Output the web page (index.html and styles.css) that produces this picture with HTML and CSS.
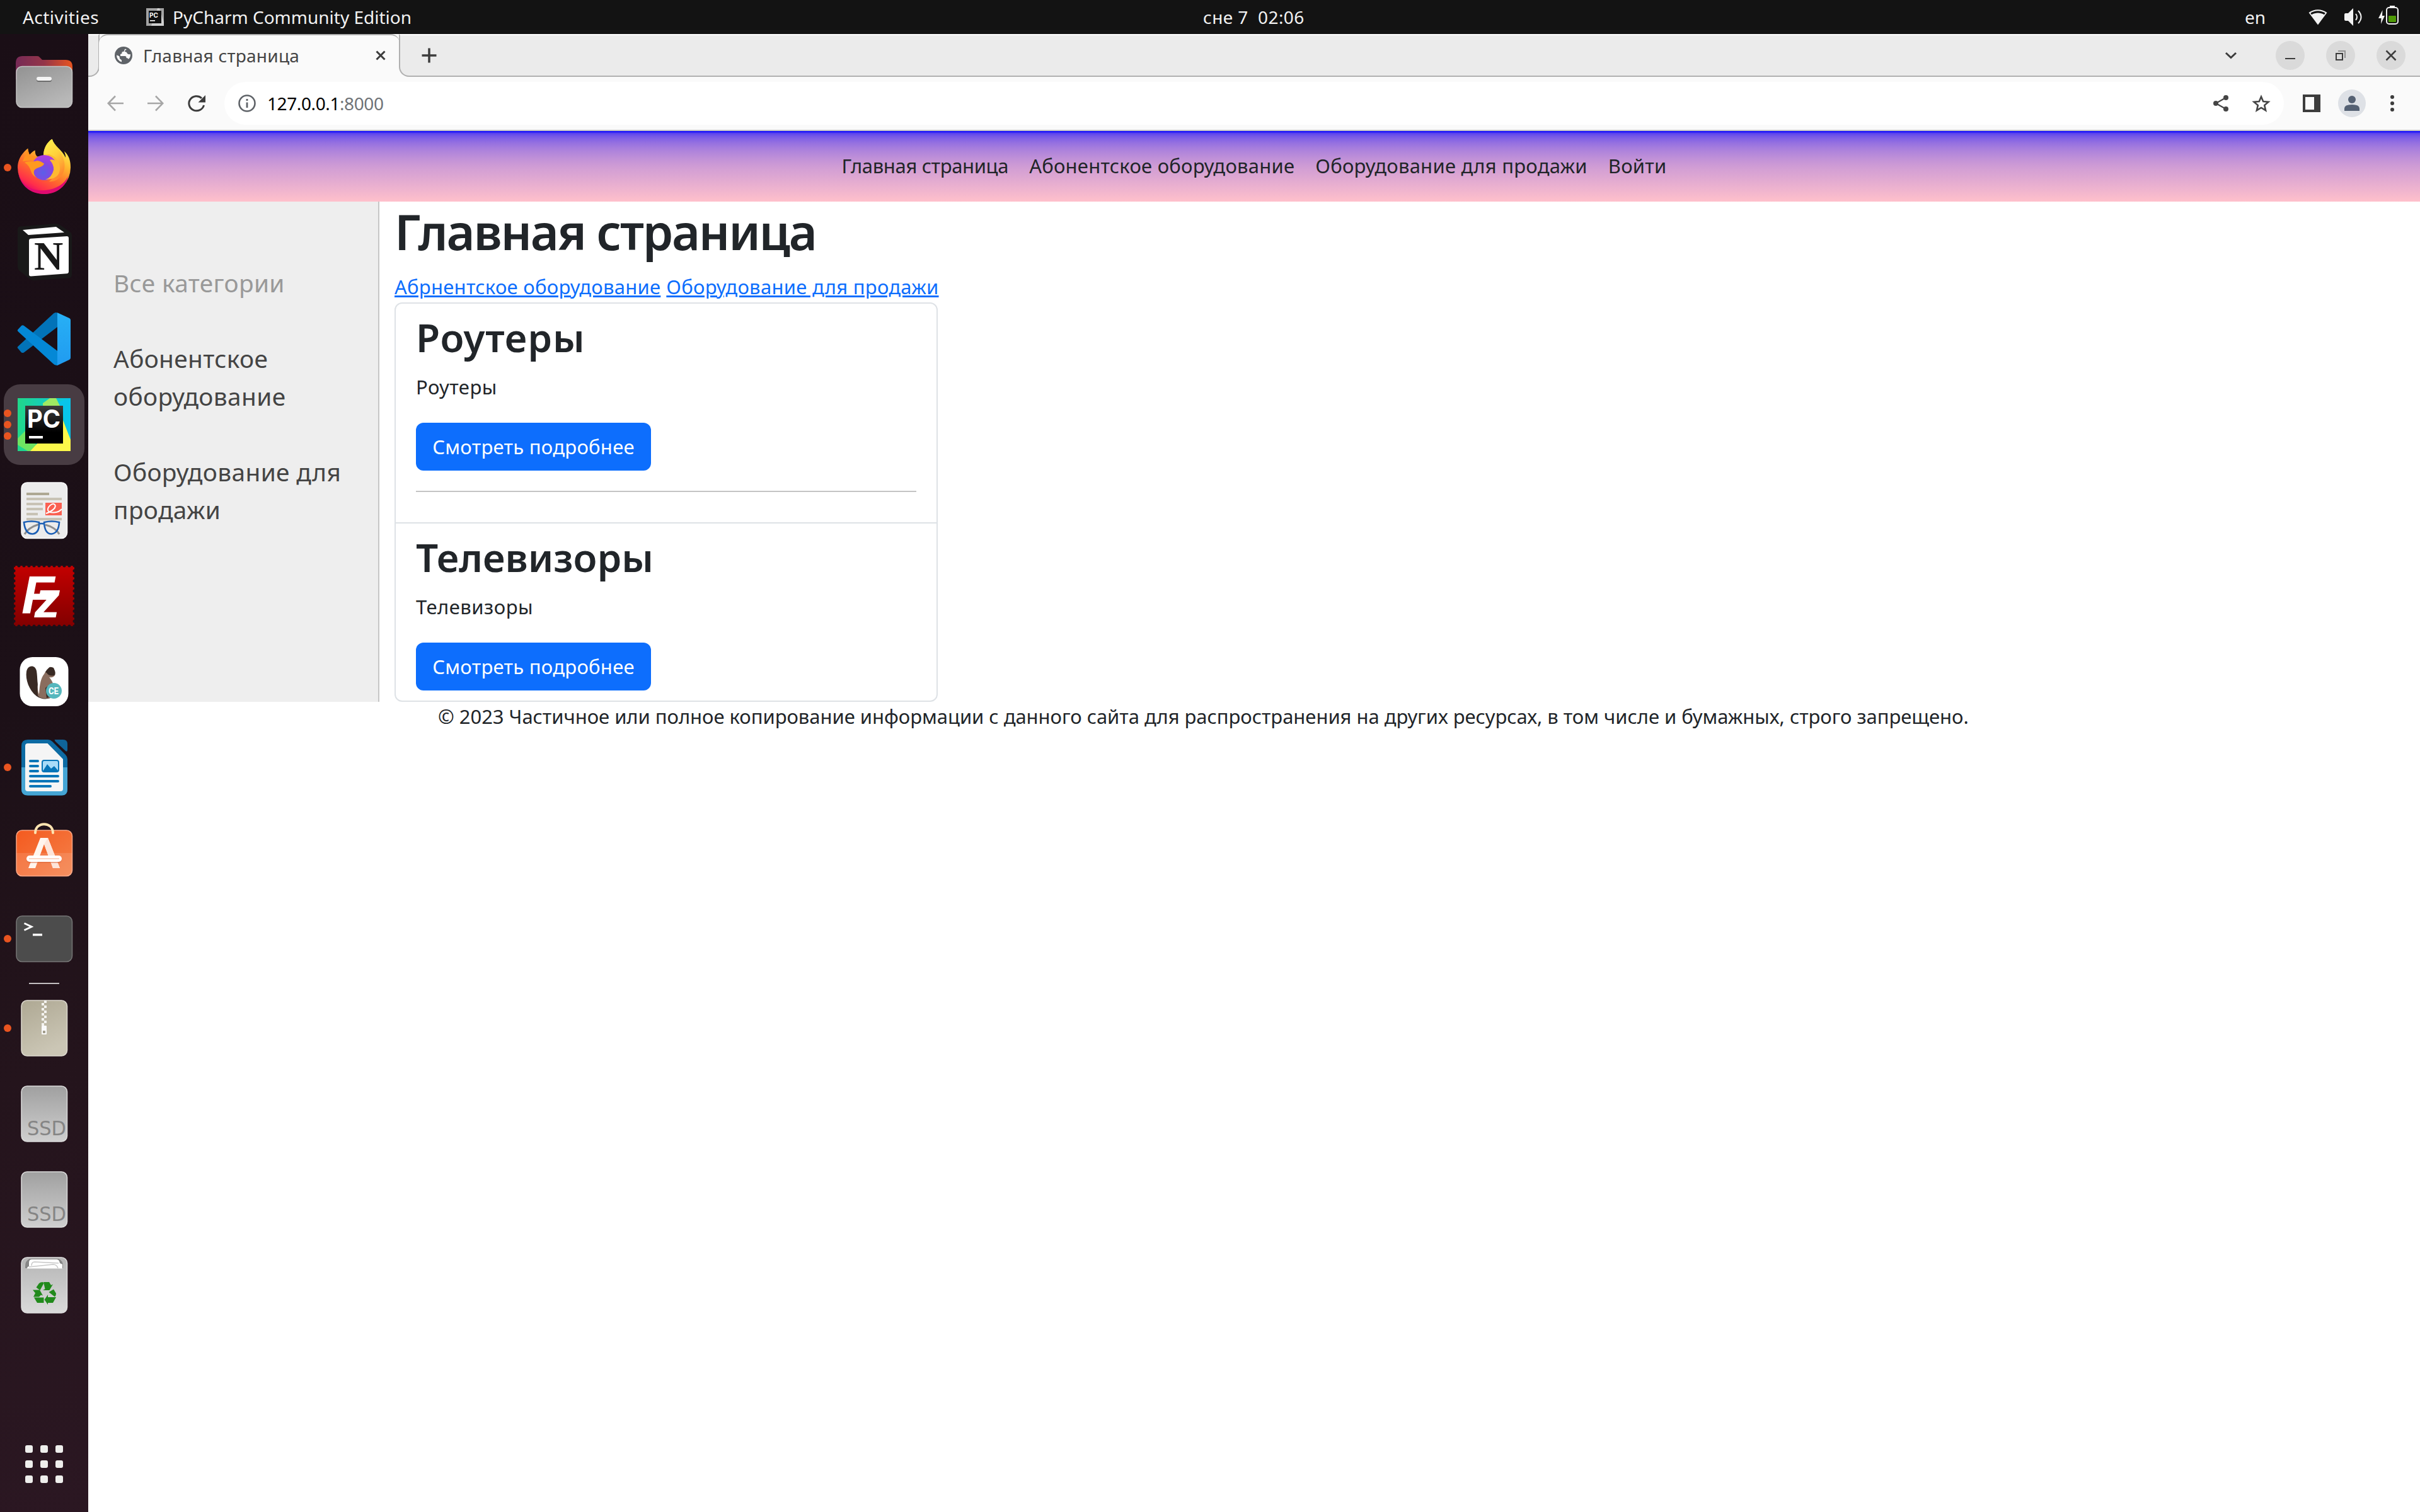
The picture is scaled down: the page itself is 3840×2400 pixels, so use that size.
FILE: index.html
```html
<!DOCTYPE html>
<html lang="ru">
<head>
<meta charset="utf-8">
<title>Главная страница</title>
<link rel="stylesheet" href="styles.css">
</head>
<body>
<div class="desktop">
  <header class="topbar">
    <div class="topbar-left">
      <span class="activities">Activities</span>
      <svg class="app-icon" viewBox="0 0 28 28"><rect width="28" height="28" fill="#a3a3a3"/><path d="M18 0h3l7 22v6H8z" fill="#d0d0d0"/><rect x="4" y="4" width="20" height="20" fill="#111"/><text x="5" y="14.500" class="pc-mini">PC</text><rect x="6" y="19" width="8" height="1.600" fill="#fff"/></svg>
      <span class="app-name">PyCharm Community Edition</span>
    </div>
    <div class="clock">сне 7&nbsp; 02:06</div>
    <div class="topbar-right">
      <span class="lang">en</span>
      <svg class="wifi" width="30" height="26" viewBox="0 0 30 26"><path d="M15 25.500 0.500 6C9-.500 21-.500 29.500 6z" fill="#f2f2f2"/><path d="M3.200 6.800C10 2 20 2 26.800 6.800L25 9.300C19 5.500 11 5.500 5 9.300z" fill="#131313"/></svg>
      <svg class="volume" width="30" height="28" viewBox="0 0 30 28"><path d="M0 10q0-2 2-2h4l8-8v28l-8-8H2q-2 0-2-2z" fill="#f2f2f2"/><path d="M18 9q4 5 0 10M22 4q9 10 0 20" fill="none" stroke="#f2f2f2" stroke-width="2"/></svg>
      <svg class="battery" width="34" height="32" viewBox="0 0 34 32"><path d="M6.500 7 0 20h4.500L4 29 10 16H6z" fill="#f2f2f2"/><rect x="18" y="0" width="8" height="3" fill="#f2f2f2"/><rect x="13" y="3" width="18" height="26" rx="4" fill="none" stroke="#f2f2f2" stroke-width="2"/><rect x="16" y="16" width="12" height="10" rx="1" fill="#4e9a06"/></svg>
    </div>
  </header>

  <div class="workspace">
    <nav class="dock">
      <svg width="0" height="0" class="defs">
        <defs>
          <linearGradient id="gFolder" x1="0" x2="1"><stop offset="0" stop-color="#762a56"/><stop offset=".5" stop-color="#943549"/><stop offset="1" stop-color="#e95420"/></linearGradient>
          <linearGradient id="gGrey" x1="0" y1="0" x2=".6" y2="1"><stop offset="0" stop-color="#929292"/><stop offset="1" stop-color="#b8b8b8"/></linearGradient>
          <linearGradient id="gFox" x1=".8" y1=".1" x2=".3" y2="1"><stop offset="0" stop-color="#fff44f"/><stop offset=".3" stop-color="#ffb62e"/><stop offset=".6" stop-color="#ff6a2c"/><stop offset=".85" stop-color="#ff2f4a"/><stop offset="1" stop-color="#e5006f"/></linearGradient>
          <radialGradient id="gGlobe" cx=".45" cy=".7" r=".7"><stop offset="0" stop-color="#5c5ee8"/><stop offset=".5" stop-color="#8348e0"/><stop offset="1" stop-color="#b33be0"/></radialGradient>
          <linearGradient id="gFlame" x1="0" y1="0" x2=".4" y2="1"><stop offset="0" stop-color="#fff44f"/><stop offset=".5" stop-color="#ffd23c"/><stop offset="1" stop-color="#ff8a2e"/></linearGradient>
          <linearGradient id="gVs" x1="0" y1="0" x2="0" y2="1"><stop offset="0" stop-color="#27b0f5"/><stop offset="1" stop-color="#209bf0"/></linearGradient>
          <linearGradient id="gFz" x1="0" y1="0" x2="0" y2="1"><stop offset="0" stop-color="#c30000"/><stop offset="1" stop-color="#820000"/></linearGradient>
          <linearGradient id="gPcBg" x1="0" x2="1"><stop offset="0" stop-color="#21d789"/><stop offset="1" stop-color="#08c5e8"/></linearGradient>
          <linearGradient id="gPcBlack" x1="0" y1="0" x2="0" y2="1"><stop offset="0" stop-color="#3c3c3c"/><stop offset=".7" stop-color="#000"/></linearGradient>
          <linearGradient id="gBag" x1="0" y1="0" x2="1" y2="1"><stop offset="0" stop-color="#f45a1f"/><stop offset="1" stop-color="#f4814a"/></linearGradient>
          <linearGradient id="gArchive" x1="0" y1="0" x2=".4" y2="1"><stop offset="0" stop-color="#aea893"/><stop offset="1" stop-color="#cbc6b5"/></linearGradient>
          <linearGradient id="gSsd" x1="0" y1="0" x2="0" y2="1"><stop offset="0" stop-color="#a0a0a0"/><stop offset="1" stop-color="#cfcfcf"/></linearGradient>
          <linearGradient id="gTrash" x1="0" y1="0" x2="0" y2="1"><stop offset="0" stop-color="#b5b5b5"/><stop offset="1" stop-color="#dadada"/></linearGradient>
        </defs>
      </svg>

      <div class="slot">
        <svg viewBox="0 0 96 96"><path d="M3 18q0-11 11-11h23q3 0 4 2l4 4h37q11 0 11 11v20H3z" fill="url(#gFolder)"/><rect x="4" y="23.500" width="88.500" height="65" rx="9" fill="url(#gGrey)" stroke="#c4c4c4" stroke-width="1.500"/><rect x="36" y="41" width="24" height="7" rx="3" fill="#6d6d6d"/><rect x="36" y="40" width="24" height="6" rx="3" fill="#f4f4f4"/></svg>
      </div>

      <div class="slot">
        <div class="dots"><i></i></div>
        <svg viewBox="0 0 96 96"><path d="M22.300 17.500C23 21 23 25 25 27.500 27.500 24.500 30.500 22 33.700 20.400 33.500 25 34.500 28 37 30.500L47 30C46.500 19 52 8 60.700 2.800 64 14 76 19 82 32 82.500 28 80.500 24 79.700 22 88 29 90 38 90 48A42 42 0 1 1 6 48C6 35 13 25 22.300 17.500z" fill="url(#gFox)"/><path d="M47 31C46.500 19 52 8 60.700 2.800 64 14 80 24 80.500 44 81 62 66 72 56 70 70 60 72 44 62 38z" fill="url(#gFlame)"/><path d="M7 56C12 76 28 86 50 84 68 82 80 74 86 62 82 80 66 90 48 90 26 90 10 76 7 56z" fill="#e00a70"/><circle cx="48.500" cy="48" r="20" fill="url(#gGlobe)"/><path d="M48 28Q62 28 66 37 60 34 57 36 64 44 63 52 60 64 50 67 74 66 73 48 72 32 56 27z" fill="#ffb931"/><path d="M17 40C22 37 30 40 37 37 42 37 46 41 48 41.500 47 47 39 47 35 50 30 52 31 60 36 64 24 58 30 48 17 40z" fill="#ff9a1f"/><path d="M22 19 14 38 30 36 37 31 25 28z" fill="#ff9420"/></svg>
      </div>

      <div class="slot">
        <svg viewBox="0 0 96 96"><path d="M6 10q0-4 4-4.500L66 1q4 0 7 2l16 11q3 2 3 5v63q0 5-5 5.500L31 91q-4 0-7-3L8 75q-2-3-2-6z" fill="#191919"/><path d="M14 11 67 6 80 15 23 19z" fill="#fff"/><path d="M24 28q0-3 3-3.200L84 21q3 0 3 3v53q0 3-3 3.200L27 84.500q-3 0-3-3z" fill="#fff"/><text x="32" y="74" class="ic-notion">N</text></svg>
      </div>

      <div class="slot">
        <svg viewBox="0 0 96 96"><path d="M6 62.500q-1-1.500 1-3L63 7.500q3-2.500 6-1V29L16 69.500q-2 1-4 0z" fill="#0273b8"/><path d="M6 33.500q-1 1.500 1 3L62 87q3 3.500 7 3V67L16 27q-2-1.500-4 0z" fill="#0488d6"/><path d="M69 6.300 88 15q2 1 2 3v60q0 2-2 3L69 90z" fill="url(#gVs)"/></svg>
      </div>

      <div class="slot">
        <div class="active-tile"></div>
        <div class="dots"><i></i><i></i><i></i></div>
        <svg viewBox="0 0 96 96"><rect x="6" y="6" width="84" height="84" fill="url(#gPcBg)"/><path d="M48 20 62 6h5l13 32 10 34V6z" fill="#08c5ea"/><path d="M46 14 57 6h10l10 20-30 30z" fill="#9fea63"/><path d="M6 70 22 54 40 90H22L6 80z" fill="#6ee562"/><path d="M76 36 90 72v18H26z" fill="#fcf84a"/><rect x="18" y="18" width="60" height="60" fill="url(#gPcBlack)"/><text x="21" y="52.500" class="ic-pc" textLength="53" lengthAdjust="spacingAndGlyphs">PC</text><rect x="24" y="66" width="22" height="4" fill="#fff"/></svg>
      </div>

      <div class="slot">
        <svg viewBox="0 0 96 96"><rect x="12" y="4" width="72.500" height="88.500" rx="9" fill="#ececec" stroke="#fafafa" stroke-width="1.500"/><path d="M20 20h36v4H20z" fill="#aea893"/><path d="M20 28h56v4H20zM20 36h26v4H20zM20 44h26v4H20zM20 52h18v4H20zM20 60h56v4H20z" fill="#c8c3b5"/><rect x="50" y="36" width="26" height="20" fill="#fa6152"/><path d="M51 53C62 49 68 43 65 39 61 35 53 43 54 48 56 53 70 53 76 46" fill="none" stroke="#fff" stroke-width="2"/><path d="M17 86C20 80 28 74 40 70M72 86C68 78 58 73 50 71" fill="none" stroke="#8f8f8f" stroke-width="3"/><path d="M16 67Q28 64 40 67 41 84 30 85.500 18 86 16 67zM48 67Q60 64 72 67 71 84 60 85.500 49 86 48 67zM39 70q5-2 10 0" fill="none" stroke="#1c5fb5" stroke-width="2.600"/></svg>
      </div>

      <div class="slot">
        <svg viewBox="0 0 96 96"><rect width="96" height="96" fill="url(#gFz)"/><rect width="96" height="96" fill="none" stroke="#1d1018" stroke-width="5" stroke-dasharray="0 8" stroke-linecap="round"/><text x="12" y="76" class="ic-fz">F<tspan class="z" dx="-32" dy="6">z</tspan></text></svg>
      </div>

      <div class="slot">
        <svg viewBox="0 0 96 96"><rect x="9.500" y="9" width="77" height="78" rx="20" fill="#fff"/><path d="M36 71C24 62 18 44 20 32 22 21 34 21 36 31 38 42 36 54 42 64L58 74Q46 78 36 71z" fill="#382923"/><path d="M38 70C36 54 40 36 50 27 62 22 64 27 65 36 66 40 60 42 56 41 66 52 66 66 58 74 48 76 40 74 38 70z" fill="#8a6d5e"/><path d="M46 31Q54 22 63 26 68 36 64 38 56 40 52 34zM50 58q8-8 14 0l-2 12-10 4z" fill="#382923"/><path d="M52 22Q38 34 38 50 37 62 40 68 41 44 48 36 52 28 58 24" fill="#fff"/><circle cx="63.500" cy="62.500" r="12.500" fill="#56b7bd"/><text x="55" y="68" class="ic-ce" textLength="16" lengthAdjust="spacingAndGlyphs">CE</text></svg>
      </div>

      <div class="slot">
        <div class="dots"><i></i></div>
        <svg viewBox="0 0 96 96"><path d="M12 14q0-10 10-10h32q4 0 7 3l21 21q3 3 3 7v48q0 9.500-9 9.500H22q-10 0-10-9.500z" fill="#0d6ba3"/><path d="M12 48h73v35q0 9.500-9 9.500H22q-10 0-10-9.500z" fill="#45a5d4"/><path d="M65 4h13q7 0 7 7v9q0 4-3 2L66 7q-2-3-1-3z" fill="#0f6499"/><path d="M22 10h31.500L78 35v47q0 4-4 4H22q-4 0-4-4V14q0-4 4-4z" fill="#f5f5f5"/><path d="M26 38h12M26 46h12M26 54h12M26 62h44M26 70h44M26 78h32" stroke="#0675b8" stroke-width="4" stroke-linecap="round"/><rect x="45" y="37" width="26" height="18" rx="3" fill="#a8dcf8" stroke="#0675b8" stroke-width="2"/><path d="M46 54 53 43 59 50 64 46 71 54z" fill="#0675b8"/></svg>
      </div>

      <div class="slot">
        <svg viewBox="0 0 96 96"><rect x="4" y="12" width="88.500" height="72.500" rx="9" fill="url(#gBag)" stroke="#f9a583" stroke-width="1.500"/><path d="M4 48h88.500v28q0 8-8 8h-72q-8 0-8-8z" fill="#fff" opacity=".12"/><path d="M34 16C34-2.500 62-2.500 62 16" fill="none" stroke="#fde3b0" stroke-width="4" stroke-linecap="round"/><path d="M42 24h12l19 48H62L48 34 34 72H23z" fill="#fff5ee"/><path d="M54 24 73 72H62L48 34z" fill="#fde5da"/><rect x="20" y="54" width="56" height="10" rx="5" fill="#d9663a" opacity=".5"/><rect x="20" y="52" width="56" height="10" rx="5" fill="#fff"/><path d="M24 57h48" stroke="#fbd6c6" stroke-width="2"/></svg>
      </div>

      <div class="slot">
        <div class="dots"><i></i></div>
        <svg viewBox="0 0 96 96"><rect x="4" y="12" width="88.500" height="72.500" rx="9" fill="#4c4c4c" stroke="#757575" stroke-width="1.500"/><path d="M16.500 23.500 28 29 16.500 34.500" fill="none" stroke="#fff" stroke-width="3"/><rect x="30" y="40" width="15" height="3.500" fill="#fff"/></svg>
      </div>

      <div class="separator"></div>

      <div class="slot">
        <div class="dots"><i></i></div>
        <svg viewBox="0 0 96 96"><rect x="12" y="4" width="72.500" height="88" rx="9" fill="url(#gArchive)" stroke="#dedad0" stroke-width="1.500"/><path d="M50 4v40" stroke="#f4f3ef" stroke-width="4" stroke-dasharray="4"/><path d="M46 8v36" stroke="#f4f3ef" stroke-width="4" stroke-dasharray="4"/><rect x="44" y="44" width="8" height="14" rx="1" fill="#fafafa"/><rect x="46" y="52" width="4" height="4" fill="#a39e8c"/></svg>
      </div>

      <div class="slot">
        <svg viewBox="0 0 96 96"><rect x="12" y="4" width="72.500" height="88" rx="9" fill="url(#gSsd)" stroke="#dcdcdc" stroke-width="1.500"/><text x="21" y="81.500" class="ic-ssd" textLength="62" lengthAdjust="spacingAndGlyphs">SSD</text></svg>
      </div>

      <div class="slot">
        <svg viewBox="0 0 96 96"><rect x="12" y="4" width="72.500" height="88" rx="9" fill="url(#gSsd)" stroke="#dcdcdc" stroke-width="1.500"/><text x="21" y="81.500" class="ic-ssd" textLength="62" lengthAdjust="spacingAndGlyphs">SSD</text></svg>
      </div>

      <div class="slot">
        <svg viewBox="0 0 96 96"><rect x="12" y="4" width="72.500" height="88" rx="9" fill="url(#gTrash)" stroke="#dedede" stroke-width="1.500"/><path d="M18 18q0-9 7-12h46q7 3 7 12v3H18z" fill="#858585"/><path d="M24 21V12q0-5 5-5h39q4 0 5 6l4 2v6.500H21q0-3 3-3.500z" fill="#fff"/><path d="M28 17q0-6 5-6l38 2M24 19l38-4q6 0 8 6" fill="none" stroke="#c8c8c8" stroke-width="1.500"/><g fill="#218a1b"><path d="M35.500 51.500 40 45q2-2 6-2l1.500 2-6 11z"/><path d="M47 43h9l3 5 3-1.500-5.500 9.500H46l3.500-2z"/><path d="M55.500 59 63 54.500 67 61q0 4-2 5.500z"/><path d="M67 67 62 76H54v3l-5.500-8 5.500-8v4z"/><path d="M32 67.500H47.500V76H37z"/><path d="M30 56h11l5 9-3-1-3 3H31l3-6z" transform="translate(0 -.5)"/></g></svg>
      </div>

      <div class="app-grid"><i></i><i></i><i></i><i></i><i></i><i></i><i></i><i></i><i></i></div>
    </nav>

    <main class="browser">
      <div class="tabstrip">
        <div class="tab-lead"></div>
        <div class="tab">
          <svg class="globe" viewBox="0 0 28 28"><circle cx="14" cy="14" r="14" fill="#5f6368"/><path d="M17 3.500C15 5 15 6 15 7.500 12 8 11 8.500 11.500 11L9 12v3h8q2 1 1.500 3 3 0 3 2 4-3 3.500-8-3 1-5-1-1-3-4-3 0-3 3-3zM3 13.500q0 8 8 11v-3L8 19q0-3-1-4z" fill="#fafafa"/></svg>
          <span class="tab-title">Главная страница</span>
          <svg class="tab-close" viewBox="0 0 16 16"><path d="M1.500 1.500 14.500 14.500M14.500 1.500 1.500 14.500" stroke="#3c3c3c" stroke-width="3"/></svg>
        </div>
        <div class="tab-rest">
          <svg class="new-tab" viewBox="0 0 24 24"><path d="M12 .5v23M.5 12h23" stroke="#3c3c3c" stroke-width="3.500"/></svg>
          <div class="window-controls">
            <svg class="chevron" viewBox="0 0 20 12"><path d="M2 2 10 9.500 18 2" fill="none" stroke="#3c3c3c" stroke-width="3"/></svg>
            <svg class="wc" viewBox="0 0 46 46"><circle cx="23" cy="23" r="23" fill="#dadada"/><path d="M15 28h16" stroke="#3c3c3c" stroke-width="2"/></svg>
            <svg class="wc" viewBox="0 0 46 46"><circle cx="23" cy="23" r="23" fill="#dadada"/><path d="M19 16h11v11" fill="none" stroke="#929292" stroke-width="2"/><rect x="16" y="20" width="10" height="10" fill="none" stroke="#3c3c3c" stroke-width="2"/></svg>
            <svg class="wc" viewBox="0 0 46 46"><circle cx="23" cy="23" r="23" fill="#dadada"/><path d="M15.500 15.500l15 15M30.500 15.500l-15 15" stroke="#3c3c3c" stroke-width="2.500"/></svg>
          </div>
        </div>
      </div>

      <div class="toolbar">
        <svg class="nav-ic" viewBox="0 0 26 26"><path d="M26 13H2M13 1.500 1.800 13 13 24.500" fill="none" stroke="#a6a6a6" stroke-width="2.600"/></svg>
        <svg class="nav-ic forward" viewBox="0 0 26 26"><path d="M0 13h24M13 1.500 24.200 13 13 24.500" fill="none" stroke="#a6a6a6" stroke-width="2.600"/></svg>
        <svg class="nav-ic reload" viewBox="0 0 28 26"><path d="M25.500 16A12 11.500 0 1 1 22 4.800" fill="none" stroke="#3c3c3c" stroke-width="3"/><path d="M28 0v11.500H16.500z" fill="#3c3c3c"/></svg>
        <div class="omnibox">
          <svg class="info" viewBox="0 0 28 28"><circle cx="14" cy="14" r="12.500" fill="none" stroke="#5f6368" stroke-width="2.600"/><path d="M14 12.500V21M14 7v3" stroke="#5f6368" stroke-width="2.800"/></svg>
          <span class="url">127.0.0.1<span class="port">:8000</span></span>
          <svg class="share" viewBox="0 0 24 26"><path d="M20 4 4 13 20 22" fill="none" stroke="#454545" stroke-width="2.200"/><g fill="#454545"><circle cx="20" cy="4" r="4"/><circle cx="4" cy="13" r="4"/><circle cx="20" cy="22" r="4"/></g></svg>
          <svg class="star" viewBox="0 0 30 29"><path d="M15 3.500 18.200 11 26.500 11.700 20.200 17.100 22.100 25.200 15 20.900 7.900 25.200 9.800 17.100 3.500 11.700 11.800 11z" fill="none" stroke="#454545" stroke-width="2.600"/></svg>
        </div>
        <svg class="panel" viewBox="0 0 28 28"><path d="M0 0h28v28H0zM4 4v20h14V4z" fill="#3c3c3c" fill-rule="evenodd"/></svg>
        <svg class="profile" viewBox="0 0 44 44"><circle cx="22" cy="22" r="22" fill="#dee1e6"/><circle cx="22" cy="16" r="6" fill="#556173"/><path d="M10 34v-4q0-6 12-6t12 6v4z" fill="#556173"/></svg>
        <svg class="kebab" viewBox="0 0 6 28"><circle cx="3" cy="4" r="3" fill="#3c3c3c"/><circle cx="3" cy="14" r="3" fill="#3c3c3c"/><circle cx="3" cy="24" r="3" fill="#3c3c3c"/></svg>
      </div>

      <div class="page">
        <nav class="site-nav">
          <a class="home">Главная страница</a>
          <a>Абонентское оборудование</a>
          <a>Оборудование для продажи</a>
          <a>Войти</a>
        </nav>
        <div class="columns">
          <aside class="sidebar">
            <ul>
              <li class="selected">Все категории</li>
              <li>Абонентское<br>оборудование</li>
              <li>Оборудование для<br>продажи</li>
            </ul>
          </aside>
          <section class="content">
            <h1>Главная страница</h1>
            <div class="links"><a>Абрнентское оборудование</a><a>Оборудование для продажи</a></div>
            <ul class="list-group">
              <li>
                <h2 class="routers">Роутеры</h2>
                <p>Роутеры</p>
                <a class="btn">Смотреть подробнее</a>
                <hr>
              </li>
              <li>
                <h2>Телевизоры</h2>
                <p>Телевизоры</p>
                <a class="btn">Смотреть подробнее</a>
              </li>
            </ul>
          </section>
        </div>
        <footer class="footer">© 2023 Частичное или полное копирование информации с данного сайта для распространения на других ресурсах, в том числе и бумажных, строго запрещено.</footer>
      </div>
    </main>
  </div>
</div>
</body>
</html>
```
FILE: styles.css
```css
* { box-sizing: border-box; }

body {
  margin: 0;
  background: #fff;
  font-family: "Noto Sans", "Open Sans", sans-serif;
  font-size: 31px;
  color: #212529;
}

svg { display: block; flex: none; overflow: visible; }
ul { list-style: none; margin: 0; padding: 0; }

.desktop {
  width: 3840px;
  height: 2400px;
  display: flex;
  flex-direction: column;
  overflow: hidden;
}

/* GNOME top bar */
.topbar {
  height: 54px;
  background: #131313;
  color: #f2f2f2;
  display: grid;
  grid-template-columns: 1909px 1fr auto;
  font-size: 28px;
  line-height: 54px;
  white-space: nowrap;
}
.topbar-left { display: flex; align-items: center; padding-left: 36px; }
.activities { width: 196px; letter-spacing: 0.45px; }
.clock { letter-spacing: 0.4px; }
.app-icon { width: 28px; height: 28px; margin-right: 14px; }
.pc-mini { font: bold 10px "Inter", sans-serif; fill: #fff; }
.topbar-right { display: flex; align-items: center; padding-right: 32px; }
.lang { width: 101px; }
.wifi { margin-right: 27px; }
.volume { margin-right: 24px; }
.battery { margin-top: -4px; }

/* Dock */
.workspace { flex: 1; display: flex; min-height: 0; }
.dock {
  width: 140px;
  padding-top: 8px;
  background: linear-gradient(165deg, #1a0e16 0%, #1c1017 45%, #24141c 70%, #2b1722 100%);
  display: flex;
  flex-direction: column;
  align-items: center;
}
.defs { position: absolute; }
.slot {
  position: relative;
  width: 140px;
  height: 136px;
  display: flex;
  align-items: center;
  justify-content: center;
}
.slot > svg { width: 96px; height: 96px; position: relative; }
.active-tile {
  position: absolute;
  left: 6px;
  top: 4px;
  width: 128px;
  height: 128px;
  border-radius: 26px;
  background: #483c43;
}
.dots {
  position: absolute;
  left: 6px;
  top: 0;
  height: 136px;
  display: flex;
  flex-direction: column;
  justify-content: center;
  gap: 6px;
}
.dots i { width: 12px; height: 12px; border-radius: 6px; background: #e95420; }
.separator { width: 48px; height: 2px; margin: 2px 0; background: #c3bfc1; }
.app-grid {
  margin-top: auto;
  margin-bottom: 46px;
  display: grid;
  grid-template-columns: repeat(3, 12px);
  gap: 12px;
}
.app-grid i { width: 12px; height: 12px; border-radius: 3px; background: #eeeeec; }

.ic-notion { font: bold 64px "Liberation Serif", serif; fill: #191919; }
.ic-pc { font: 700 39px "Inter", sans-serif; fill: #fff; }
.ic-fz { font: italic bold 86px "Liberation Sans", sans-serif; fill: #fff; }
.ic-fz .z { font-size: 82px; }
.ic-ce { font: bold 14px "Roboto", sans-serif; fill: #fff; }
.ic-ssd { font: 32px "DejaVu Sans", sans-serif; fill: #858585; }

/* Browser chrome */
.browser { flex: 1; min-width: 0; background: #fff; }
.tabstrip { display: flex; height: 68px; background: #fafafa; }
.tab-lead {
  width: 18px;
  background: #ebebeb;
  border-top: 2px solid #fff;
  border-right: 2px solid #b0b0b0;
  border-bottom: 2px solid #b0b0b0;
  border-bottom-right-radius: 16px;
}
.tab {
  width: 477px;
  margin: 0 -1px;
  border-top: 2px solid #b0b0b0;
  border-radius: 14px 14px 0 0;
  background: #fafafa;
  display: flex;
  align-items: center;
  padding: 0 22px 2px 25px;
}
.globe { width: 28px; height: 28px; margin-right: 17px; }
.tab-title { flex: 1; font-size: 28px; line-height: 40px; letter-spacing: 0.25px; color: #454545; white-space: nowrap; }
.tab-close { width: 16px; height: 16px; }
.tab-rest {
  flex: 1;
  display: flex;
  align-items: center;
  justify-content: space-between;
  background: #ebebeb;
  border-top: 2px solid #fff;
  border-left: 2px solid #b0b0b0;
  border-bottom: 2px solid #b0b0b0;
  border-bottom-left-radius: 16px;
  padding: 0 23px 0 34px;
}
.new-tab { width: 24px; height: 24px; }
.window-controls { display: flex; align-items: center; gap: 34px; }
.chevron { width: 20px; height: 12px; margin-right: 27px; }
.wc { width: 46px; height: 46px; }

.toolbar {
  height: 86px;
  background: #fafafa;
  border-bottom: 2px solid #c5c5c5;
  display: flex;
  align-items: center;
  padding-left: 30px;
}
.nav-ic { width: 26px; height: 26px; margin-right: 38px; }
.nav-ic.reload { width: 28px; margin-right: 30px; }
.omnibox {
  width: 3268px;
  height: 68px;
  border-radius: 34px;
  background: #fff;
  display: flex;
  align-items: center;
  padding: 0 21px 0 22px;
  margin-right: 30px;
}
.info { width: 28px; height: 28px; margin-right: 18px; }
.url { flex: 1; font-size: 28px; line-height: 40px; letter-spacing: -0.4px; color: #000; }
.port { color: #6f7377; }
.share { width: 24px; height: 26px; margin-right: 37px; }
.star { width: 30px; height: 29px; }
.panel { width: 28px; height: 28px; margin-right: 28px; }
.profile { width: 44px; height: 44px; margin-right: 39px; }
.kebab { width: 6px; height: 28px; }

/* Page */
.site-nav {
  height: 112px;
  padding-bottom: 3px;
  background: linear-gradient(blue, 10%, pink);
  display: flex;
  align-items: center;
  justify-content: center;
  gap: 33px;
  line-height: 48px;
  letter-spacing: 0.24px;
}
.site-nav .home { letter-spacing: -0.35px; }
.columns { display: flex; height: 794px; }
.sidebar {
  width: 462px;
  background: #eee;
  border-right: 2px solid #c6c6c6;
  padding: 99px 0 0 40px;
  font-size: 38.800px;
  line-height: 60px;
  letter-spacing: 0.38px;
  color: #444;
}
.sidebar li { margin-bottom: 60px; white-space: nowrap; }
.sidebar .selected { color: #999; }
.content { padding-left: 24px; }
h1, h2 { margin: 0 0 16px; font-weight: 600; white-space: nowrap; }
h1 { font-size: 77.500px; line-height: 94px; margin-bottom: 18px; letter-spacing: -2.2px; }
h2 { font-size: 62px; line-height: 75px; margin-bottom: 18px; }
h2.routers { letter-spacing: 0.9px; }
.links { display: flex; gap: 9px; line-height: 46px; padding-bottom: 2px; letter-spacing: 0.27px; color: #0d6efd; white-space: nowrap; }
.links a { text-decoration: underline; text-decoration-thickness: 3px; }
.list-group {
  width: 862px;
  height: 634px;
  border: 2px solid #dee2e6;
  border-radius: 12px;
}
.list-group li { padding: 16px 32px; }
.list-group li:first-child { height: 347px; }
.list-group li + li { border-top: 2px solid #dee2e6; }
.list-group p { margin: 0 0 34px; line-height: 46px; letter-spacing: 0.5px; }
.btn {
  display: flex;
  align-items: center;
  justify-content: center;
  width: 373px;
  height: 76px;
  padding-bottom: 1px;
  border-radius: 12px;
  background: #0d6efd;
  color: #fff;
  letter-spacing: 0.27px;
  white-space: nowrap;
}
hr { margin: 32px 0; border: 0; height: 2px; background: #c4c4c4; }
.footer { padding-left: 555px; line-height: 47px; letter-spacing: -0.035px; white-space: nowrap; }
```
